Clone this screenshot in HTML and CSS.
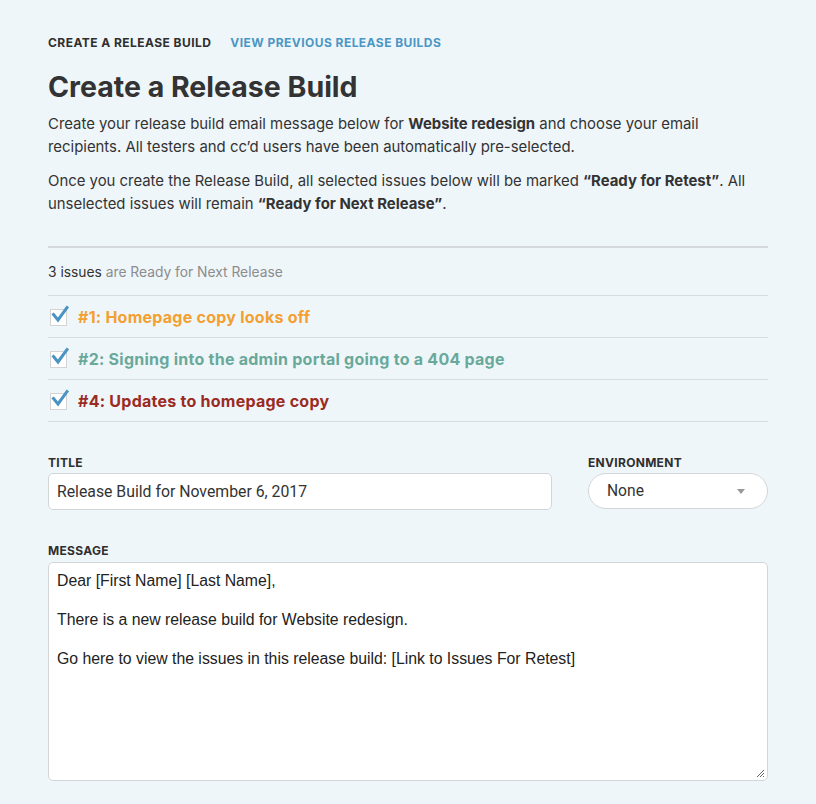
FILE: index.html
```html
<!DOCTYPE html>
<html>
<head>
<meta charset="utf-8">
<link rel="stylesheet" href="styles.css">
</head>
<body>
<div class="page">
  <nav class="tabs">
    <span class="tab active">Create a Release Build</span>
    <a class="tab link">View Previous Release Builds</a>
  </nav>
  <h1 class="title">Create a Release Build</h1>
  <p class="intro">Create your release build email message below for <b>Website redesign</b> and choose your email recipients. All testers and cc’d users have been automatically pre-selected.</p>
  <p class="intro">Once you create the Release Build, all selected issues below will be marked <b>“Ready for Retest”</b>. All unselected issues will remain <b>“Ready for Next Release”</b>.</p>
  <div class="divider"></div>
  <div class="count"><span class="dark">3 issues</span> are Ready for Next Release</div>
  <ul class="issues">
    <li class="issue">
      <span class="check"><svg viewBox="0 0 20 20" width="20" height="20"><path d="M3.5 9.5 L8 15 L17 2.5" fill="none" stroke="#4a93c3" stroke-width="3" stroke-linecap="square" stroke-linejoin="miter"/></svg></span>
      <span class="issue-text orange">#1: Homepage copy looks off</span>
    </li>
    <li class="issue">
      <span class="check"><svg viewBox="0 0 20 20" width="20" height="20"><path d="M3.5 9.5 L8 15 L17 2.5" fill="none" stroke="#4a93c3" stroke-width="3" stroke-linecap="square" stroke-linejoin="miter"/></svg></span>
      <span class="issue-text teal">#2: Signing into the admin portal going to a 404 page</span>
    </li>
    <li class="issue">
      <span class="check"><svg viewBox="0 0 20 20" width="20" height="20"><path d="M3.5 9.5 L8 15 L17 2.5" fill="none" stroke="#4a93c3" stroke-width="3" stroke-linecap="square" stroke-linejoin="miter"/></svg></span>
      <span class="issue-text red">#4: Updates to homepage copy</span>
    </li>
  </ul>
  <div class="row">
    <div class="field grow">
      <label class="label">Title</label>
      <div class="input">Release Build for November 6, 2017</div>
    </div>
    <div class="field env">
      <label class="label">Environment</label>
      <div class="select"><span>None</span><span class="caret"></span></div>
    </div>
  </div>
  <div class="field message">
    <label class="label">Message</label>
    <div class="textarea">
      <p>Dear [First Name] [Last Name],</p>
      <p>There is a new release build for Website redesign.</p>
      <p>Go here to view the issues in this release build: [Link to Issues For Retest]</p>
      <svg class="grip" width="10" height="10" viewBox="0 0 10 10"><path d="M9 2 L2 9 M9 5 L5 9 M9 8 L8 9" stroke="#666" stroke-width="1"/></svg>
    </div>
  </div>
</div>
</body>
</html>
```
FILE: styles.css
```css
* { box-sizing: border-box; }
html, body { margin: 0; padding: 0; background: #eff6fa; }
body { font-family: "Inter", "Liberation Sans", sans-serif; color: #333; }
.page { width: 720px; margin-left: 48px; padding-top: 36px; }
.tabs { display: flex; gap: 19px; font-size: 12px; font-weight: 700; text-transform: uppercase; letter-spacing: 0.45px; line-height: 14px; }
.tab.active { color: #2f2f2f; }
.tab.link { color: #4b97c4; }
.title { font-size: 28.5px; font-weight: 700; margin: 19px 0 8px; line-height: 36px; color: #333; letter-spacing: 0; }
.intro { font-size: 14.9px; line-height: 23px; margin: 0 0 11px; color: #333; }
.intro b { font-weight: 700; }
.divider { height: 2px; background: #d5d9dc; margin-top: 30px; }
.count { font-size: 13.8px; color: #8c8c8c; padding: 14px 0 13px; line-height: 20px; border-bottom: 1px solid #d8dcdf; }
.count .dark { color: #333; }
.issues { list-style: none; margin: 0; padding: 0; }
.issue { display: flex; align-items: center; height: 42px; border-bottom: 1px solid #d8dcdf; padding-left: 2px; }
.check { position: relative; width: 17px; height: 17px; background: #fff; border: 1px solid #d4d4d4; margin-right: 11px; margin-top: 2px; }
.check svg { position: absolute; left: -1px; top: -5px; }
.issue-text { font-size: 16px; font-weight: 700; letter-spacing: 0.25px; }
.orange { color: #f3a030; }
.teal { color: #69a99a; }
.red { color: #992b22; }
.row { display: flex; gap: 36px; margin-top: 34px; }
.grow { flex: 1; }
.env { width: 180px; }
.label { display: block; font-size: 12px; font-weight: 700; text-transform: uppercase; letter-spacing: 0.3px; color: #2f2f2f; line-height: 14px; margin-bottom: 3px; }
.input { height: 37px; background: #fff; border: 1px solid #d3d6d8; border-radius: 5px; padding: 0 8px; display: flex; align-items: center; font-family: "Roboto", "Liberation Sans", sans-serif; font-size: 15.8px; color: #333; }
.select { height: 36px; background: #fff; border: 1px solid #d3d6d8; border-radius: 18px; padding: 0 22px 0 18px; display: flex; align-items: center; justify-content: space-between; font-family: "Roboto", "Liberation Sans", sans-serif; font-size: 15.6px; color: #333; }
.caret { width: 0; height: 0; border-left: 4px solid transparent; border-right: 4px solid transparent; border-top: 5px solid #999; }
.message { margin-top: 34px; }
.textarea { position: relative; height: 219px; margin-top: 4px; background: #fff; border: 1px solid #d3d6d8; border-radius: 5px; padding: 8px 8px; font-family: "Liberation Sans", sans-serif; font-size: 15.8px; line-height: 19.5px; color: #222; }
.textarea p { margin: 0 0 19.5px; }
.grip { position: absolute; right: 2px; bottom: 2px; }
```
